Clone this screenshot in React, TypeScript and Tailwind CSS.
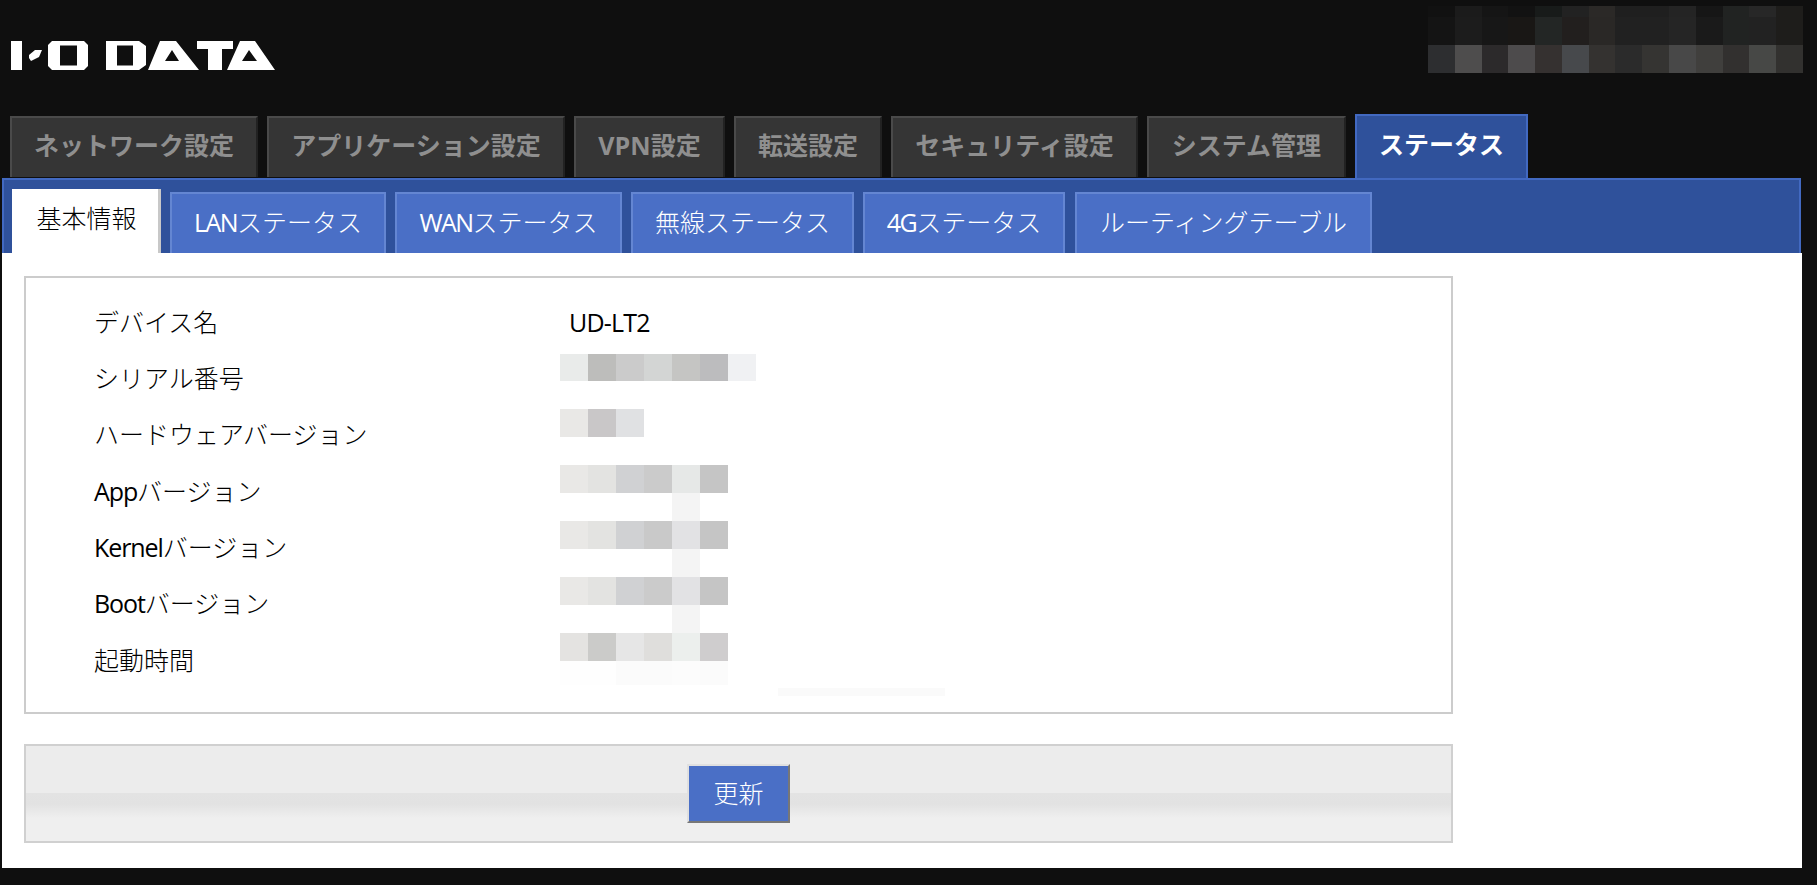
const topTabs = [
  { label: 'ネットワーク設定', w: 'w-[248px]' },
  { label: 'アプリケーション設定', w: 'w-[298px]' },
  { label: 'VPN設定', w: 'w-[151px]' },
  { label: '転送設定', w: 'w-[148px]' },
  { label: 'セキュリティ設定', w: 'w-[247px]' },
  { label: 'システム管理', w: 'w-[199px]' },
]

const subTabs = [
  { latin: 'LAN', label: 'ステータス', w: 'w-[216px]', ml: 'ml-[9px]' },
  { latin: 'WAN', label: 'ステータス', w: 'w-[227px]', ml: 'ml-[9px]' },
  { label: '無線ステータス', w: 'w-[223px]', ml: 'ml-[9px]' },
  { latin: '4G', label: 'ステータス', w: 'w-[202px]', ml: 'ml-[9px]' },
  { label: 'ルーティングテーブル', w: 'w-[297px]', ml: 'ml-[10px]' },
]

// pixelated areas of the screenshot
const serialCells = ['bg-[#e9ebea]', 'bg-[#bdbdbb]', 'bg-[#cbcbcb]', 'bg-[#d3d5d4]', 'bg-[#c5c5c3]', 'bg-[#bcbcbe]', 'bg-[#f0f1f3]']
const hwCells = ['bg-[#e9e8e6]', 'bg-[#c9c7c8]', 'bg-[#e0e1e3]']
const appCells = ['bg-[#e9e8e6]', 'bg-[#e3e3e1]', 'bg-[#d0d1d3]', 'bg-[#cbcbcb]', 'bg-[#e6e8e7]', 'bg-[#c5c5c5]']
const kernelCells = ['bg-[#e9e8e6]', 'bg-[#e3e3e1]', 'bg-[#d0d1d3]', 'bg-[#c9c9c9]', 'bg-[#e2e2e4]', 'bg-[#c5c5c5]']
const bootCells = ['bg-[#e9e8e6]', 'bg-[#e3e3e1]', 'bg-[#d0d1d3]', 'bg-[#cbcbcb]', 'bg-[#e2e2e4]', 'bg-[#c5c5c5]']
const uptimeCells = ['bg-[#e4e3e1]', 'bg-[#cbcbc9]', 'bg-[#e6e6e6]', 'bg-[#dfdedc]', 'bg-[#ecefed]', 'bg-[#cfcdce]']
const fadeCells = ['bg-white', 'bg-white', 'bg-white', 'bg-white', 'bg-[#f4f4f4]', 'bg-white']
const uptimeFade = ['bg-[#fefefe]', 'bg-[#fefefe]', 'bg-[#fbfbfb]', 'bg-[#fbfbfb]', 'bg-[#fcfcfc]', 'bg-[#fbfbfb]']

const headerRows = [
  { h: 'h-[11px]', cells: ['bg-[#111111]', 'bg-[#1b1b1b]', 'bg-[#151515]', 'bg-[#121212]', 'bg-[#181b1a]', 'bg-[#222222]', 'bg-[#2b2927]', 'bg-[#1f1f1f]', 'bg-[#1f1f1f]', 'bg-[#242424]', 'bg-[#161616]', 'bg-[#212322]', 'bg-[#272727]', 'bg-[#1e1d1b]'] },
  { h: 'h-[28px]', cells: ['bg-[#141414]', 'bg-[#1c1c1c]', 'bg-[#171717]', 'bg-[#191715]', 'bg-[#232625]', 'bg-[#221f1e]', 'bg-[#2a2826]', 'bg-[#212121]', 'bg-[#212121]', 'bg-[#252525]', 'bg-[#1a1a1a]', 'bg-[#212322]', 'bg-[#222222]', 'bg-[#1e1d1b]'] },
  { h: 'h-[28px]', cells: ['bg-[#2d2e30]', 'bg-[#4e4d4d]', 'bg-[#2c2a2b]', 'bg-[#4d4b4c]', 'bg-[#353130]', 'bg-[#47494c]', 'bg-[#343230]', 'bg-[#2b2b2b]', 'bg-[#353432]', 'bg-[#484848]', 'bg-[#403f3d]', 'bg-[#32302f]', 'bg-[#474846]', 'bg-[#32312f]'] },
]

const infoRows = [
  { label: 'デバイス名', text: 'UD-LT2' },
  { label: 'シリアル番号', pt: 'pt-[4px]', strips: [{ h: 'h-[27px]', cells: serialCells }] },
  { label: 'ハードウェアバージョン', pt: 'pt-[2px]', strips: [{ h: 'h-[28px]', cells: hwCells }] },
  { latin: 'App', label: 'バージョン', pt: 'pt-[2px]', strips: [{ h: 'h-[28px]', cells: appCells }, { h: 'h-[28px]', cells: fadeCells }] },
  { latin: 'Kernel', label: 'バージョン', pt: 'pt-[2px]', strips: [{ h: 'h-[28px]', cells: kernelCells }, { h: 'h-[28px]', cells: fadeCells }] },
  { latin: 'Boot', label: 'バージョン', pt: 'pt-[1px]', strips: [{ h: 'h-[28px]', cells: bootCells }, { h: 'h-[28px]', cells: fadeCells }] },
  { label: '起動時間', pt: 'pt-[1px]', strips: [{ h: 'h-[28px]', cells: uptimeCells }, { h: 'h-[24px]', cells: uptimeFade }] },
]

function Strip({ h, cells }: { h: string; cells: string[] }) {
  return (
    <div className={`flex ${h}`}>
      {cells.map((c, i) => (
        <div key={i} className={`w-[28px] ${c}`} />
      ))}
    </div>
  )
}

function Logo() {
  return (
    <svg width="270" height="32" viewBox="10 40 270 32" fill="#ffffff" className="block">
      <path d="M11 41H22V70H11Z" />
      <path d="M35 50H42L39 57L31 61L29 58V55Z" />
      <path fillRule="evenodd" d="M52 41H84L88 45V66L84 70H52L48 66V45ZM60 45.500V65.500H77V45.500Z" />
      <path fillRule="evenodd" d="M106 41H139L146 46V65L139 70H106ZM117 45.500V65.500H133V45.500Z" />
      <path fillRule="evenodd" d="M160 41H176L199 70H148ZM172 50L165 61H179Z" />
      <path d="M197 41H233V49H222V70H208V49H197Z" />
      <path fillRule="evenodd" d="M240 41H255L275 70H227ZM249 50L242 61H257Z" />
    </svg>
  )
}

export default function App() {
  return (
    <div className="min-h-[885px] bg-[#0f0f0f] font-['Open_Sans','Noto_Sans_CJK_JP',sans-serif] text-[25px] leading-none">
      <header className="flex h-[114px] justify-between pt-[6px] pr-[14px]">
        <div className="pt-[34px] pl-[10px]">
          <Logo />
        </div>
        <div className="w-[375px] overflow-hidden">
          {headerRows.map((r, i) => (
            <Strip key={i} h={r.h} cells={r.cells} />
          ))}
        </div>
      </header>

      <nav className="flex h-[64px] items-end gap-[9px] pl-[10px]">
        {topTabs.map((t) => (
          <div
            key={t.label}
            className={`mb-[1px] flex h-[61px] ${t.w} items-center justify-center border-2 border-r-[#222222] border-b-0 border-t-[#4a4a4a] border-l-[#4a4a4a] bg-[#353535] pb-[4px] font-bold text-[#8f8f8f]`}
          >
            {t.label}
          </div>
        ))}
        <div className="flex h-[64px] w-[173px] items-center justify-center border-2 border-b-0 border-[#4269c1] bg-[#2f519b] pb-[5px] font-bold text-white">
          ステータス
        </div>
      </nav>

      <main className="ml-[2px] w-[1800px]">
        <div className="flex h-[75px] w-[1799px] items-end border-2 border-b-0 border-[#4269c1] bg-[#2f519b] pl-[8px]">
          <div className="flex h-[64px] w-[149px] items-center justify-center border-r-[3px] border-[#c8c8c8] bg-white pb-[6px] pl-[3px] font-light text-black">
            基本情報
          </div>
          {subTabs.map((t) => (
            <div
              key={t.label + t.w}
              className={`flex h-[61px] ${t.w} ${t.ml} items-center justify-center border-2 border-b-0 border-[#6486d2] bg-[#4a6fc6] pb-[3px] font-light text-white`}
            >
              <span>
                {t.latin && <span className="font-normal tracking-[-1.5px]">{t.latin}</span>}
                {t.label}
              </span>
            </div>
          ))}
        </div>

        <div className="h-[615px] bg-white pt-[23px] pl-[22px]">
          <div className="h-[438px] w-[1429px] border-2 border-[#cccccc] pt-[16px] pl-[68px] text-black">
            {infoRows.map((r) => (
              <div key={r.label + r.latin} className="flex h-[56.33px]">
                <div className="flex w-[466px] items-center font-light">
                  <span>
                    {r.latin && <span className="font-normal tracking-[-1.1px]">{r.latin}</span>}
                    {r.label}
                  </span>
                </div>
                {r.text ? (
                  <div className="flex items-center pl-[9px] tracking-[-0.8px]">{r.text}</div>
                ) : (
                  <div className={r.pt}>
                    {r.strips?.map((s, i) => (
                      <Strip key={i} h={s.h} cells={s.cells} />
                    ))}
                  </div>
                )}
              </div>
            ))}
            <div className="ml-[684px] h-[8px] w-[167px] bg-[#fafafa]" />
          </div>

          <div className="mt-[30px] flex h-[99px] w-[1429px] items-center justify-center border-2 border-[#d0d0d0] bg-[linear-gradient(#ececec_0,#ececec_47px,#e3e3e3_47px,#e2e2e2_58px,#efefef_72px)]">
            <button className="h-[59px] w-[103px] border-2 border-t-[#e0e0e0] border-r-[#777777] border-b-[#777777] border-l-[#e0e0e0] bg-[#4a6fc6] font-light text-white">
              更新
            </button>
          </div>
        </div>
      </main>
    </div>
  )
}
